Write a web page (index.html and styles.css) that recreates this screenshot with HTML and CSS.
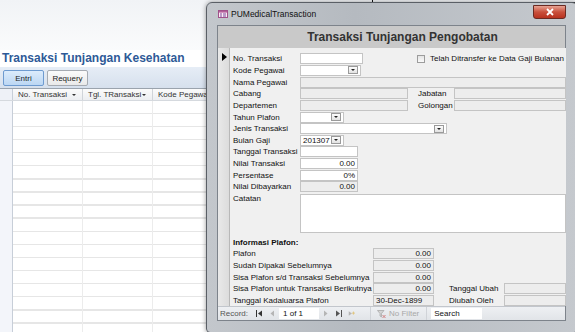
FILE: index.html
```html
<!DOCTYPE html>
<html lang="id">
<head>
    <meta charset="UTF-8">
    <title>Transaksi Tunjangan Kesehatan</title>
    <link rel="stylesheet" href="styles.css">
</head>
<body>
<div class="desk">
    <div class="page-head"></div>
    <h1 class="page-title">Transaksi Tunjangan Kesehatan</h1>
    <div class="toolbar">
        <button class="tb-btn tb-btn-active">Entri</button>
        <button class="tb-btn">Requery</button>
    </div>

    <div class="sheet">
        <div class="sheet-head">
            <div class="sel"></div>
            <div class="col-head">No. Transaksi <span class="sort"></span></div>
            <div class="col-head">Tgl. TRansaksi <span class="sort"></span></div>
            <div class="col-head">Kode Pegawai</div>
        </div>
        <div class="sheet-body">
            <div class="sel"></div>
            <div class="col"></div>
            <div class="col"></div>
            <div class="col col-last"></div>
        </div>
    </div>

    <div class="behind-window"></div>

    <!-- form popup -->
    <div class="window">
        <div class="titlebar">
            <svg class="form-icon" viewBox="0 0 10 8">
                <rect x="0.5" y="0.5" width="9" height="7" fill="#fbe9f4" stroke="#a0528a"/>
                <rect x="1" y="1" width="8" height="1.6" fill="#b4609a"/>
                <line x1="2" y1="4" x2="4" y2="4" stroke="#7a4a9a"/>
                <line x1="5" y1="4" x2="8" y2="4" stroke="#7a4a9a"/>
                <line x1="2" y1="6" x2="4" y2="6" stroke="#7a4a9a"/>
                <line x1="5" y1="6" x2="8" y2="6" stroke="#7a4a9a"/>
            </svg>
            <span class="win-title">PUMedicalTransaction</span>
            <div class="close-btn">
                <svg viewBox="0 0 10 8"><path d="M2 1 L8 7 M8 1 L2 7" stroke="#fff" stroke-width="1.8"/></svg>
            </div>
        </div>

        <div class="client">
            <div class="form-header">Transaksi Tunjangan Pengobatan</div>

            <div class="form-body">
                <div class="record-sel">
                    <svg class="rec-arrow" viewBox="0 0 5 8"><path d="M0 0 L5 4 L0 8 Z" fill="#000"/></svg>
                </div>

                <div class="detail">
                    <div class="row">
                        <span class="lbl">No. Transaksi</span>
                        <span class="box w63"></span>
                        <span class="check"></span>
                        <span class="check-lbl">Telah Ditransfer ke Data Gaji Bulanan</span>
                    </div>
                    <div class="row">
                        <span class="lbl">Kode Pegawai</span>
                        <span class="box combo w61"><span class="drop"></span></span>
                    </div>
                    <div class="row">
                        <span class="lbl">Nama Pegawai</span>
                        <span class="box ro wfull"></span>
                    </div>
                    <div class="row">
                        <span class="lbl">Cabang</span>
                        <span class="box ro w108"></span>
                        <span class="lbl-side">Jabatan</span>
                        <span class="box ro w112"></span>
                    </div>
                    <div class="row">
                        <span class="lbl">Departemen</span>
                        <span class="box ro w108"></span>
                        <span class="lbl-side">Golongan</span>
                        <span class="box ro w112"></span>
                    </div>
                    <div class="row">
                        <span class="lbl">Tahun Plafon</span>
                        <span class="box combo w44"><span class="drop"></span></span>
                    </div>
                    <div class="row">
                        <span class="lbl">Jenis Transaksi</span>
                        <span class="box combo w147"><span class="drop"></span></span>
                    </div>
                    <div class="row">
                        <span class="lbl">Bulan Gaji</span>
                        <span class="box combo w44"><span class="val">201307</span><span class="drop"></span></span>
                    </div>
                    <div class="row">
                        <span class="lbl">Tanggal Transaksi</span>
                        <span class="box w58"></span>
                    </div>
                    <div class="row">
                        <span class="lbl">Nilai Transaksi</span>
                        <span class="box num w58">0.00</span>
                    </div>
                    <div class="row">
                        <span class="lbl">Persentase</span>
                        <span class="box num w58">0%</span>
                    </div>
                    <div class="row">
                        <span class="lbl">Nilai Dibayarkan</span>
                        <span class="box ro num w58">0.00</span>
                    </div>
                    <div class="row row-memo">
                        <span class="lbl">Catatan</span>
                        <span class="box memo wfull"></span>
                    </div>

                    <div class="section-title">Informasi Plafon:</div>
                    <div class="prow">
                        <span class="plbl">Plafon</span>
                        <span class="box ro num w61">0.00</span>
                    </div>
                    <div class="prow">
                        <span class="plbl">Sudah Dipakai Sebelumnya</span>
                        <span class="box ro num w61">0.00</span>
                    </div>
                    <div class="prow">
                        <span class="plbl">Sisa Plafon s/d Transaksi Sebelumnya</span>
                        <span class="box ro num w61">0.00</span>
                    </div>
                    <div class="prow">
                        <span class="plbl">Sisa Plafon untuk Transaksi Berikutnya</span>
                        <span class="box ro num w61">0.00</span>
                        <span class="lbl-audit">Tanggal Ubah</span>
                        <span class="box ro w62"></span>
                    </div>
                    <div class="prow">
                        <span class="plbl">Tanggal Kadaluarsa Plafon</span>
                        <span class="box ro w61">30-Dec-1899</span>
                        <span class="lbl-audit">Diubah Oleh</span>
                        <span class="box ro w62"></span>
                    </div>
                </div>
            </div>

            <div class="navbar">
                <span class="nav-lbl">Record:</span>
                <svg class="nav-ico" viewBox="0 0 7 7"><path d="M0.5 0 V7" stroke="#333"/><path d="M6 0.5 L2 3.5 L6 6.5 Z" fill="#333"/></svg>
                <svg class="nav-ico dim" viewBox="0 0 7 7"><path d="M5 0.5 L1.5 3.5 L5 6.5 Z" fill="#b5b5b5"/></svg>
                <span class="nav-pos">1 of 1</span>
                <svg class="nav-ico dim" viewBox="0 0 7 7"><path d="M2 0.5 L5.5 3.5 L2 6.5 Z" fill="#b5b5b5"/></svg>
                <svg class="nav-ico" viewBox="0 0 7 7"><path d="M1 0.5 L5 3.5 L1 6.5 Z" fill="#555"/><path d="M6.5 0 V7" stroke="#555"/></svg>
                <svg class="nav-ico dim" viewBox="0 0 9 7"><path d="M1 0.5 L5 3.5 L1 6.5 Z" fill="#b5b5b5"/><path d="M7 1 V5 M5 3 H9" stroke="#e0c070"/></svg>
                <span class="nav-filter">
                    <svg class="filter-ico" viewBox="0 0 9 8"><path d="M0.5 0.5 H7 L4.5 3.5 V7 L3 6 V3.5 Z" fill="#d4d4d4" stroke="#aaa" stroke-width="0.8"/><path d="M5.5 5 L8.5 8 M8.5 5 L5.5 8" stroke="#d08080"/></svg>
                    No Filter
                </span>
                <span class="nav-search">Search</span>
            </div>
        </div>
    </div>
</div>
</body>
</html>
```

FILE: styles.css
```css
body {
    margin: 0;
    font-family: "Liberation Sans", Arial, sans-serif;
    font-size: 8px;
    color: #111;
}
.desk {
    position: relative;
    width: 575px;
    height: 332px;
    overflow: hidden;
    background: #fff;
}

/* access background page */
.page-head {
    height: 50px;
    background: linear-gradient(#f1f3f6, #fafbfc);
}
.page-title {
    margin: 0;
    height: 16px;
    padding-left: 2px;
    font-size: 12px;
    line-height: 16px;
    font-weight: bold;
    color: #2f5a97;
}
.toolbar {
    display: flex;
    gap: 3px;
    height: 21px;
    margin-top: 1px;
    padding: 3px 3px 0;
    box-sizing: border-box;
    background: linear-gradient(#e6edf6, #d6e0ed);
}
.tb-btn {
    width: 41px;
    height: 16px;
    padding: 0;
    font-family: inherit;
    font-size: 8px;
    color: #222;
    border: 1px solid #a6abb2;
    border-radius: 2px;
    background: linear-gradient(#fbfbfb, #e9e9e9);
}
.tb-btn-active {
    border-color: #6e9bd0;
    background: linear-gradient(#dcecfc, #bcd7f3);
}
.sheet-head {
    display: flex;
    height: 13px;
    border-top: 1px solid #9aa3ad;
    border-bottom: 1px solid #d5d9de;
    box-sizing: border-box;
    background: linear-gradient(#fbfbfb, #eceef1);
}
.sel {
    width: 13px;
    flex: none;
    box-sizing: border-box;
    border-right: 1px solid #c7ced8;
    background: #eef1f7;
}
.col-head {
    width: 70px;
    flex: none;
    display: flex;
    align-items: center;
    padding-left: 5px;
    box-sizing: border-box;
    border-right: 1px solid #d0d4d9;
    color: #333;
    white-space: nowrap;
}
.sort {
    margin-left: auto;
    margin-right: 6px;
    width: 0;
    height: 0;
    border-left: 2px solid transparent;
    border-right: 2px solid transparent;
    border-top: 2px solid #333;
}
.sheet-body {
    display: flex;
    height: 240px;
}
.sheet-body .sel {
    background: #f3f5fa;
}
.col {
    width: 70px;
    flex: none;
    box-sizing: border-box;
    border-right: 1px solid #ececec;
    background: repeating-linear-gradient(#fff 0, #fff 11.6px, #e6e6e6 11.6px, #e6e6e6 13.1px);
}
.col-last {
    flex: 1;
}

/* window behind the popup */
.behind-window {
    position: absolute;
    left: 372px;
    top: -10px;
    width: 220px;
    height: 12px;
    border-left: 1px solid #111;
    border-bottom: 1px solid #333;
}

/* popup form window */
.window {
    position: absolute;
    left: 206px;
    top: 2px;
    width: 372px;
    height: 331px;
    display: flex;
    flex-direction: column;
    box-sizing: border-box;
    border: 1px solid #5a5f66;
    border-radius: 6px 6px 4px 4px;
    background: linear-gradient(90deg, #c3c7cc, #b5bac0 40%, #c5c9ce);
    box-shadow: 0 0 5px rgba(0, 0, 0, 0.4);
}
.titlebar {
    display: flex;
    align-items: center;
    height: 22px;
    padding-left: 11px;
    flex: none;
}
.form-icon {
    width: 10px;
    height: 8px;
}
.win-title {
    margin-left: 3px;
    font-size: 8.5px;
    color: #111;
}
.close-btn {
    align-self: flex-start;
    margin: 2px 11px 0 auto;
    width: 33px;
    height: 14px;
    display: flex;
    align-items: center;
    justify-content: center;
    box-sizing: border-box;
    border: 1px solid #6b2a22;
    border-radius: 0 0 3px 3px;
    background: linear-gradient(#e8a393, #c9503c 50%, #b8321f);
}
.close-btn svg {
    width: 10px;
    height: 8px;
}
.client {
    flex: 1;
    display: flex;
    flex-direction: column;
    margin: 0 11px 11px 10px;
    border: 1px solid #7d838b;
    background: #f0f0f0;
}
.form-header {
    height: 22px;
    flex: none;
    display: flex;
    align-items: center;
    justify-content: center;
    padding-left: 22px;
    font-size: 12px;
    font-weight: bold;
    color: #333;
    background: #c9c9c9;
}
.form-body {
    flex: 1;
    display: flex;
}
.record-sel {
    width: 12px;
    flex: none;
    box-sizing: border-box;
    border-right: 1px solid #b8b8b8;
    background: linear-gradient(90deg, #e9e9e9, #dcdcdc);
}
.rec-arrow {
    display: block;
    width: 5px;
    height: 8px;
    margin: 5px 0 0 4px;
}
.detail {
    flex: 1;
    padding: 5px 0 0 3px;
    background: #f0f0f0;
}
.row {
    display: flex;
    align-items: center;
    height: 11.65px;
}
.lbl {
    width: 67px;
    flex: none;
    white-space: nowrap;
}
.box {
    display: flex;
    align-items: center;
    height: 11px;
    flex: none;
    padding: 0 2px;
    box-sizing: border-box;
    border: 1px solid #c4c4c4;
    background: #fff;
    white-space: nowrap;
}
.box.ro {
    background: #ededed;
}
.num {
    justify-content: flex-end;
}
.combo {
    padding-right: 2px;
}
.combo .val {
    flex: 1;
}
.drop {
    margin-left: auto;
    width: 10px;
    height: 8px;
    box-sizing: border-box;
    border: 1px solid #9a9a9a;
    background: linear-gradient(#fdfdfd, #e2e2e2);
    position: relative;
}
.drop::after {
    content: "";
    position: absolute;
    left: 2px;
    top: 2px;
    border-left: 2px solid transparent;
    border-right: 2px solid transparent;
    border-top: 2px solid #222;
}
.w44 { width: 44px; }
.w58 { width: 58px; }
.w61 { width: 61px; }
.w62 { width: 62px; }
.w63 { width: 63px; }
.w108 { width: 108px; }
.w112 { width: 112px; }
.w147 { width: 147px; }
.wfull { width: 266px; }

.check {
    width: 8px;
    height: 8px;
    margin-left: 54px;
    box-sizing: border-box;
    border: 1px solid #9c9c9c;
    background: linear-gradient(#e4e4e4, #fafafa);
}
.check-lbl {
    margin-left: 5px;
    white-space: nowrap;
}
.lbl-side {
    width: 36px;
    margin-left: 10px;
    flex: none;
}
.row-memo {
    align-items: flex-start;
    height: 39px;
    margin-top: 1px;
}
.memo {
    height: 39px;
}
.section-title {
    margin-top: 4px;
    height: 11px;
    line-height: 11px;
    font-weight: bold;
}
.prow {
    display: flex;
    align-items: center;
    height: 11.75px;
}
.plbl {
    width: 140px;
    flex: none;
    white-space: nowrap;
}
.lbl-audit {
    width: 55px;
    margin-left: 15px;
    flex: none;
}

/* record navigation */
.navbar {
    height: 13px;
    flex: none;
    display: flex;
    align-items: center;
    padding-left: 2px;
    border-top: 1px solid #c2c6cc;
    background: linear-gradient(#eef0f3, #e1e4e8);
    color: #555;
}
.nav-lbl {
    margin-right: 5px;
}
.nav-ico {
    width: 7px;
    height: 7px;
    margin: 0 3px;
}
.nav-pos {
    height: 11px;
    width: 40px;
    padding-left: 4px;
    box-sizing: border-box;
    line-height: 11px;
    color: #111;
    background: #fff;
}
.nav-filter {
    display: flex;
    align-items: center;
    height: 13px;
    margin-left: 12px;
    padding: 0 7px 0 6px;
    border-left: 1px solid #d0d3d8;
    border-right: 1px solid #d0d3d8;
    color: #a8a8a8;
}
.filter-ico {
    width: 9px;
    height: 8px;
    margin-right: 3px;
}
.nav-search {
    height: 11px;
    width: 51px;
    margin-left: 4px;
    padding-left: 3px;
    box-sizing: border-box;
    line-height: 11px;
    color: #111;
    background: #fff;
}
```
